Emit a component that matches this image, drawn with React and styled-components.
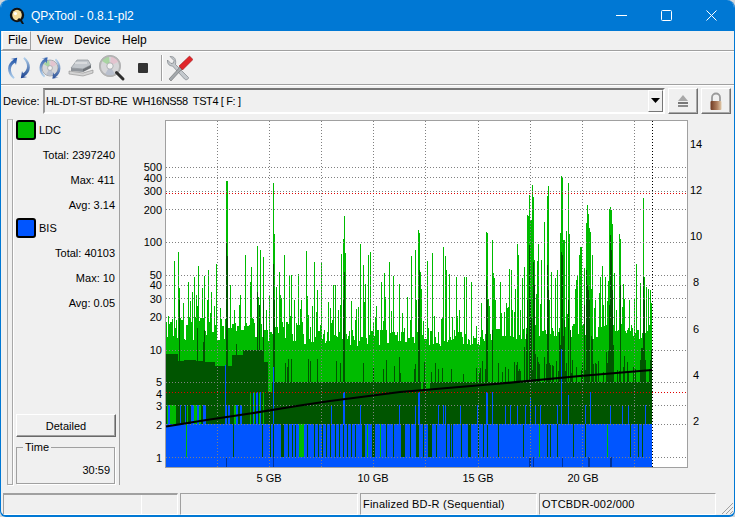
import styled, { createGlobalStyle } from "styled-components"

const GlobalStyle = createGlobalStyle`
  html, body { margin:0; padding:0; background:#cfd6dc; }
  #root { width:735px; height:517px; overflow:hidden; }
`

const uiFont = `"Liberation Sans", Arial, sans-serif`

const Window = styled.div`
  width:735px;
  height:517px;
  box-sizing:border-box;
  display:flex;
  flex-direction:column;
  background:#f0f0f0;
  border:1px solid #0078d4;
  border-top:none;
  border-bottom-width:2px;
  border-radius:8px 8px 6px 6px;
  overflow:hidden;
  font-family:${uiFont};
  font-size:11px;
  color:#000;
`
const TitleBar = styled.div`
  height:31px;
  flex:none;
  display:flex;
  align-items:center;
  background:#0078d4;
  color:#fff;
  padding-left:8px;
`
const TitleText = styled.span`
  font-size:12px;
  margin-left:6px;
  flex:1;
`
const WinButton = styled.div`
  width:45px;
  height:31px;
  display:flex;
  align-items:center;
  justify-content:center;
`
const MenuBar = styled.div`
  height:19px;
  flex:none;
  display:flex;
  padding-left:1px;
  font-size:12px;
  border-bottom:1px solid #a0a0a0;
  box-shadow:0 1px 0 #fff;
`
const MenuItem = styled.div`
  box-sizing:border-box;
  height:19px;
  padding:2px 5px 0 6px;
  width:${p => p.$w}px;
  ${p => p.$active && `
    border:1px solid;
    border-color:#fff #a0a0a0 #a0a0a0 #fff;
    padding:1px 0 0 5px;
  `}
`
const ToolBar = styled.div`
  height:32px;
  margin-top:1px;
  flex:none;
  display:flex;
  align-items:center;
  padding-left:2px;
  border-bottom:1px solid #a0a0a0;
  box-shadow:0 1px 0 #fff;
`
const ToolButton = styled.div`
  width:31px;
  height:30px;
  display:flex;
  align-items:center;
  justify-content:center;
`
const ToolSep = styled.div`
  width:1px;
  height:26px;
  margin:0 2px 0 3px;
  background:#a0a0a0;
  box-shadow:1px 0 0 #fff;
`
const DeviceRow = styled.div`
  height:26px;
  flex:none;
  margin-top:3px;
  display:flex;
  align-items:stretch;
  padding-left:2px;
`
const DeviceLabel = styled.div`
  width:40px;
  line-height:26px;
`
const Combo = styled.div`
  width:622px;
  box-sizing:border-box;
  display:flex;
  align-items:center;
  justify-content:space-between;
  background:#f0f0f0;
  border:2px solid;
  border-color:#777 #fff #fff #999;
  padding:0 0 0 1px;
  font-size:11px;
  letter-spacing:-.38px;
  white-space:pre;
`
const ComboArrow = styled.div`
  width:15px;
  height:22px;
  box-sizing:border-box;
  display:flex;
  align-items:center;
  justify-content:center;
  border:1px solid;
  border-color:#fff #777 #777 #fff;
`
const SquareButton = styled.div`
  width:30px;
  margin-left:${p => p.$gap}px;
  box-sizing:border-box;
  display:flex;
  align-items:center;
  justify-content:center;
  border:1px solid;
  border-color:#fff #707070 #707070 #fff;
  box-shadow:inset -1px -1px 0 #a8a8a8;
`
const Main = styled.div`
  flex:1;
  display:flex;
  margin-top:5px;
  min-height:0;
`
const Rail = styled.div`
  width:4px;
  height:364px;
  margin-left:6px;
  border:1px solid #a8a8a8;
  border-top-color:#c0c0c0;
  box-shadow:1px 1px 0 #fff;
`
const SidePanel = styled.div`
  width:107px;
  height:366px;
  box-sizing:border-box;
  padding-left:3px;
  display:flex;
  flex-direction:column;
  border-right:1px solid #a0a0a0;
`
const Legend = styled.div`
  height:20px;
  margin-top:${p => p.$top}px;
  margin-bottom:3px;
  display:flex;
  align-items:center;
  gap:3px;
  font-size:11px;
`
const Swatch = styled.div`
  width:20px;
  height:20px;
  box-sizing:border-box;
  border:2px solid #000;
  border-radius:3px;
  background:${p => p.$color};
`
const StatRow = styled.div`
  height:25px;
  line-height:25px;
  text-align:right;
  padding-right:4px;
`
const DetailButton = styled.div`
  height:23px;
  width:100px;
  margin-top:auto;
  box-sizing:border-box;
  text-align:center;
  line-height:22px;
  border:1px solid;
  border-color:#fff #696969 #696969 #fff;
  box-shadow:inset -1px -1px 0 #a0a0a0;
`
const TimeBox = styled.fieldset`
  margin:4px 0 1px 0;
  padding:0 4px 0 0;
  width:99px;
  height:43px;
  box-sizing:border-box;
  border:1px solid #a0a0a0;
  box-shadow:1px 1px 0 #fff;
  text-align:right;
`
const TimeTitle = styled.legend`
  text-align:left;
  margin-left:6px;
  padding:0 2px;
  line-height:12px;
`
const TimeValue = styled.div`
  margin-top:11px;
`
const ChartSvg = styled.svg`
  display:block;
  flex:none;
  margin-left:2px;
  font-family:${uiFont};
  font-size:11px;
`
const StatusBar = styled.div`
  flex:none;
  height:22px;
  margin-top:6px;
  display:flex;
  padding-left:2px;
  gap:2px;
`
const StatusCell = styled.div`
  position:relative;
  box-sizing:border-box;
  width:${p => p.$w}px;
  padding:2px 0 0 2px;
  font-size:11px;
  line-height:17px;
  letter-spacing:.2px;
  border:1px solid;
  border-color:#a0a0a0 #fff #fff #a0a0a0;
  border-top-width:${p => p.$thick ? "2px" : "1px"};
`
const CellMark = styled.div`
  position:absolute;
  left:137px;
  top:0;
  bottom:0;
  width:1px;
  background:#fff;
`
const SizeGrip = styled.svg`
  margin-left:auto;
  align-self:flex-end;
`

function rng(seed) {
  let a = seed
  return () => {
    a = (a + 0x6d2b79f5) | 0
    let t = Math.imul(a ^ (a >>> 15), 1 | a)
    t = (t + Math.imul(t ^ (t >>> 7), 61 | t)) ^ t
    return ((t ^ (t >>> 14)) >>> 0) / 4294967296
  }
}

const X0 = 166
const X1 = 652

const lightSpikes = [[174,261],[178,252],[179,288],[192,292],[198,266],[204,276],[208,270],[216,264],[226,181],[227,181],[245,255],[251,267],[257,246],[260,250],[263,257],[273,183],[274,234],[279,272],[284,255],[289,276],[291,275],[298,274],[306,251],[314,262],[321,262],
  [333,285],[335,285],[341,254],[343,239],[344,216],[345,253],[360,244],[363,265],[365,284],[368,255],[370,252],[384,273],[389,262],[381,282],[393,276],[399,284],[411,256],[415,250],[418,230],[419,233],[420,272],[427,261],[432,253],[443,247],[445,256],[446,270],[449,274],[456,277],[464,277],[466,277],[471,282],[486,232],[487,233],[492,240],[493,273],[494,278],
  [500,282],[511,270],[517,244],[518,255],[522,278],[524,267],[527,215],[528,216],[529,195],[530,220],[531,220],[532,185],[533,197],[534,260],[538,244],[541,260],[544,222],[547,196],[548,186],[551,272],[555,278],[557,270],[560,233],[561,176],[562,177],[563,240],[564,240],[566,231],[568,183],[569,234],[577,276],[579,255],[580,247],[581,247],[584,268],[586,223],[587,205],[588,214],[589,228],[590,232],[592,255],[600,277],[602,266],[605,277],[609,209],[610,207],[611,210],[612,224],[614,273],[619,234],[620,239],[623,284],[636,264],[640,283],[643,198],[644,277],[646,287],[651,303]]

const darkSpikes = [[226,243],[227,256],[273,264],[274,300],[343,300],[344,272],[418,298],[419,270],[486,280],[487,300],[492,330],[527,300],[529,245],[530,300],[531,318],[533,262],[534,285],[547,265],[548,290],[561,252],[562,255],[564,320],[568,300],[570,330],[584,305],[586,270],[587,285],[588,290],[589,300],[609,305],[610,235],[611,250],[612,290],[620,285],[643,277],[644,300],[651,350],[179,300],[197,328],[204,330],[257,292],[259,305],[263,300]]

const band = [[166,178,354],[178,184,361],[184,196,360],[196,205,361],[205,215,362],[215,232,366],[232,243,355],[243,263,350],[263,268,362]]
const clusters = [[524,536],[558,570],[584,593],[606,614],[638,646]]

const slots = [233,262,270,273,[281,283],288,292,295,307,314,318,322,326,330,335,339,343,347,351,355,[362,364],372,[373,374],386,393,[401,404],410,[416,418],423,[428,431],436,446,452,461,[468,470],478,483,487,498,523,547,550,557,573,585,630,638,642,450]
const brightSlots = [186,[299,303],367,380,539,607]
const navy = [226,273,[529,530],533,562,[588,589],[610,611]]
const stripes = [[167,168,"l"],[168,170,"b"],[170,176,"l"],[176,177,"d"],[176,177,"b"],[180,181,"b"],[185,186,"b"],[187,188,"l"],[191,194,"b"],[194,197,"l"],[197,199,"b"],[199,201,"l"],[203,206,"b"],[225,227,"b"],[228,230,"b"],[234,236,"l"],[236,238,"b"],[240,242,"b"]]
const tallBlue = [[225,226,365],[273,274,367],[343,345,392],[418,420,392],[486,488,392],[492,493,392],[561,562,349],[568,569,395],[530,531,398],[590,591,392],[253,255,392],[256,258,392],[260,261,392]]
const thinBlue = [331,360,399,415,438,443,445,460,477,505,510,517,525,535,540,557,585,590,610,622,628,645]
const thinLight = [[250,251],[254,255],[259,260],[263,264]]

const hGrid = [457.5,424.5,405.5,392.5,382.5,350.5,317.5,298.5,285.5,275.5,242.5,209.5,191.5,177.5,167.5]
const vGrid = [217.5,269.5,321.5,373.5,425.5,478.5,530.5,582.5,634.5]
const leftTicks = [[500,167],[400,178],[300,191],[200,210],[100,242],[50,275],[40,285],[30,299],[20,317],[10,350],[5,382],[4,394],[3,406],[2,425],[1,458]]
const rightTicks = [[14,144],[12,190],[10,236],[8,282],[6,329],[4,375],[2,421]]
const xTicks = [["5 GB",269],["10 GB",373],["15 GB",478],["20 GB",583]]

function buildChart() {
  const rand = rng(41)
  const paths = { light: "", dark: "", blue: "", slot: "", mid: "", navy: "" }
  const add = (key, x0, x1, y0, y1) => {
    paths[key] += `M${x0} ${y0}H${x1}V${y1}H${x0}Z`
  }
  const lightMap = new Map(lightSpikes)
  const darkMap = new Map(darkSpikes)
  let base = 322
  for (let x = X0; x < X1; x++) {
    if (rand() < 0.6) {
      const target = x < 300 ? 328 : x < 495 ? 338 : 332
      base = target + Math.round((rand() - 0.5) * (x < 300 ? 26 : 16))
    }
    let top = base
    const cluster = x > 505 && x < 620 && Math.sin(x / 9) > 0
    if (rand() < (cluster ? 0.5 : 0.34)) top = base - Math.round(rand() * (cluster ? 70 : 46))
    if (lightMap.has(x)) top = lightMap.get(x)
    add("light", x, x + 1, top, 405)

    let dtop = 382
    for (const [a, b, y] of band) if (x >= a && x < b) dtop = y
    if (dtop === 382 && rand() < 0.16) dtop = 382 - Math.round(8 + rand() * 18)
    if (dtop !== 382 && x < 263 && rand() < 0.05) dtop -= Math.round(10 + rand() * 20)
    const inCluster = clusters.some(([a, b]) => x >= a && x < b)
    if (inCluster && rand() < 0.6) dtop = 360 - Math.round(rand() * 30)
    else if (x > 495 && rand() < 0.25) dtop = 372 - Math.round(rand() * 12)
    if (darkMap.has(x)) dtop = darkMap.get(x)
    const notch = (x >= 268 && x < 272) || (x >= 421 && x < 423) || (x >= 426 && x < 430)
    add("dark", x, x + 1, notch ? (x < 300 ? 392 : 390) : dtop, 424)
  }
  add("blue", X0, X1, 424, 467)
  const range = v => Array.isArray(v) ? v : [v, v]
  for (const s of slots) {
    const [a, b] = range(s)
    add("slot", a, b + 1, 424, 457)
  }
  for (const s of brightSlots) {
    const [a, b] = range(s)
    add("mid", a, b + 1, 424, 457)
  }
  for (const s of navy) {
    const [a, b] = range(s)
    add("navy", a, b + 1, 457, 467)
  }
  for (const [a, b, c] of stripes) {
    add(c === "l" ? "mid" : c === "b" ? "blue" : "slot", a, b, 405, 424)
  }
  for (const [a, b] of thinLight) add("mid", a, b, 392, 424)
  for (const [a, b, y] of tallBlue) add("blue", a, b, y, 424)
  for (const x of thinBlue) add("blue", x, x + 1, 405, 424)
  return paths
}

const chart = buildChart()
const curve = "166,426.5 200,421 250,413.5 300,405.5 330,401 400,392 495,384 580,376 652,370"

const Chart = () => (
  <ChartSvg width="612" height="368" viewBox="122 119 612 368">
    <rect x="165.5" y="120.5" width="522" height="347" fill="#fff" stroke="#a0a0a0" />
    <g shapeRendering="crispEdges">
      <path d={chart.light} fill="#00bb00" />
      <path d={chart.dark} fill="#005500" />
      <path d={chart.blue} fill="#0055ff" />
      <path d={chart.slot} fill="#005500" />
      <path d={chart.mid} fill="#00bb00" />
      <path d={chart.navy} fill="#003399" />
    </g>
    <g stroke="#808080" strokeDasharray="1 2" shapeRendering="crispEdges" fill="none">
      {hGrid.map(y => <line key={y} x1="166" x2="687" y1={y} y2={y} />)}
      {vGrid.map(x => <line key={x} x1={x} x2={x} y1="121" y2="467" />)}
    </g>
    <g stroke="#e00000" strokeDasharray="1 2" shapeRendering="crispEdges">
      <line x1="166" x2="687" y1="193.5" y2="193.5" />
      <line x1="166" x2="687" y1="392.5" y2="392.5" />
    </g>
    <line x1="652.5" x2="652.5" y1="121" y2="467" stroke="#000" strokeDasharray="1 2" shapeRendering="crispEdges" />
    <polyline points={curve} fill="none" stroke="#000" strokeWidth="2.2" />
    <g fill="#000" textAnchor="end">
      {leftTicks.map(([v, y]) => <text key={v} x="162" y={y + 4}>{v}</text>)}
    </g>
    <g fill="#000">
      {rightTicks.map(([v, y]) => <text key={v} x={v > 9 ? 690 : 693} y={y + 4}>{v}</text>)}
    </g>
    <g fill="#000" textAnchor="middle">
      {xTicks.map(([v, x]) => <text key={v} x={x} y="482">{v}</text>)}
    </g>
  </ChartSvg>
)

const AppLogo = () => (
  <svg width="16" height="18" viewBox="0 0 16 18">
    <circle cx="8" cy="8" r="7.2" fill="#111" />
    <ellipse cx="8" cy="8" rx="4.8" ry="5.2" fill="#f4dc9c" />
    <circle cx="6.4" cy="6.6" r="1.6" fill="#fff" />
    <path d="M8 13l3 1 2 3h2l-2-4-3-2z" fill="#111" />
  </svg>
)

const ReloadIcon = () => (
  <svg width="26" height="26" viewBox="0 0 26 26">
    <defs>
      <linearGradient id="arcA" x1="0" y1="0" x2="0" y2="1">
        <stop offset="0" stopColor="#1b4fa5" /><stop offset="1" stopColor="#b5d4ee" />
      </linearGradient>
      <linearGradient id="arcB" x1="0" y1="0" x2="0" y2="1">
        <stop offset="0" stopColor="#b5d4ee" /><stop offset="1" stopColor="#173f8e" />
      </linearGradient>
    </defs>
    <path d="M8 4.500C.5 8.500 0 18 7.500 24l1.200-1.600C3.500 17.500 3.800 10.500 9 7.800l1 2.200 1.200-7.200-6.400 1.200z" fill="url(#arcA)" />
    <path d="M18 21.500c7.500-4 8-13.500.5-19.500l-1.200 1.600c5.200 4.900 4.900 11.900-.3 14.600l-1-2.200-1.200 7.200 6.400-1.200z" fill="url(#arcB)" />
  </svg>
)

const Disc = ({ cx, cy, r }) => (
  <g>
    <circle cx={cx} cy={cy} r={r} fill="#d6d6d8" stroke="#8f9296" strokeWidth=".7" />
    <path d={`M${cx} ${cy}L${cx - r * 0.8} ${cy - r * 0.5}A${r} ${r} 0 0 1 ${cx - r * 0.1} ${cy - r * 0.95}Z`} fill="#a9d4a2" />
    <path d={`M${cx} ${cy}L${cx + r * 0.1} ${cy - r * 0.95}A${r} ${r} 0 0 1 ${cx + r * 0.8} ${cy - r * 0.4}Z`} fill="#e3c4cf" />
    <path d={`M${cx} ${cy}L${cx - r * 0.5} ${cy + r * 0.8}A${r} ${r} 0 0 0 ${cx + r * 0.5} ${cy + r * 0.8}Z`} fill="#b9c0ce" />
    <circle cx={cx} cy={cy} r={r * 0.3} fill="#f2f2f2" stroke="#8f9296" strokeWidth=".6" />
  </g>
)

const DiscIcon = () => (
  <svg width="26" height="26" viewBox="0 0 26 26">
    <Disc cx={13} cy={13} r={8} />
    <path d="M8 3.500C1 7.500.8 17 7 22.500l1.200-1.600C3.500 16.500 3.700 9.500 8.800 6.500l1 2.200.8-6.400-6.200 1.200z" fill="url(#arcA)" opacity=".9" />
    <path d="M18 22.500c7-4 7.200-13.500 1-19l-1.200 1.600c4.700 4.400 4.500 11.400-.6 14.400l-1-2.200-.8 6.400 6.200-1.200z" fill="url(#arcB)" opacity=".9" />
  </svg>
)

const DriveIcon = () => (
  <svg width="26" height="24" viewBox="0 0 26 24">
    <path d="M3 12L9 4h11l3 5-8 4z" fill="#c2c7cc" stroke="#80868c" strokeWidth=".6" />
    <path d="M3 12l12 1v3L3 15z" fill="#8e9399" />
    <path d="M15 13l8-4v3l-8 4z" fill="#6e7378" />
    <path d="M1 15l14 2 10-3v3l-10 3-14-2z" fill="#d4d4d4" stroke="#7a7a7a" strokeWidth=".5" />
    <path d="M7 7h12" stroke="#eeeeee" />
  </svg>
)

const ScanIcon = () => (
  <svg width="28" height="28" viewBox="0 0 28 28">
    <Disc cx={12} cy={12} r={10.500} />
    <circle cx="12" cy="12" r="10" fill="none" stroke="#b4b4b4" strokeWidth="1.600" />
    <path d="M18.500 18.500l6.500 6.500" stroke="#2e2e2e" strokeWidth="3" strokeLinecap="round" />
  </svg>
)

const ToolsIcon = () => (
  <svg width="26" height="27" viewBox="0 0 26 27">
    <path d="M3 1.500l4 4-.5 2.500-2.500.5-3.500-3.500C.2 8 1.500 11 5.500 11l12 13c1.500 1.500 4 .5 4-1.500l-13-13C9.500 4 7 1 3 1.500z" fill="#c4c9cd" stroke="#6e7478" strokeWidth=".6" />
    <path d="M2 24l11-12 2 2L4 26z" fill="#a4a9ad" stroke="#5c5c5c" strokeWidth=".5" />
    <path d="M12 11L22.500 1 26 4.500 15.500 15z" fill="#e0262a" stroke="#8e1114" strokeWidth=".5" />
  </svg>
)

const EjectIcon = () => (
  <svg width="12" height="14" viewBox="0 0 12 14">
    <path d="M6 1l5 6H1z" fill="#a8a8a8" />
    <rect x="1" y="8" width="10" height="2" fill="#777" />
    <rect x="1" y="11" width="10" height="2" fill="#8a8a8a" />
  </svg>
)

const LockIcon = () => (
  <svg width="14" height="19" viewBox="0 0 14 19">
    <defs>
      <linearGradient id="lockFill" x1="0" y1="0" x2="1" y2="0">
        <stop offset="0" stopColor="#6f3a22" /><stop offset=".6" stopColor="#b08060" /><stop offset="1" stopColor="#e0c8a8" />
      </linearGradient>
    </defs>
    <path d="M3 9V5.500a4 4 0 0 1 8 0V9" fill="none" stroke="#9a9a9a" strokeWidth="1.800" />
    <rect x="1.500" y="9" width="11" height="9" rx="1" fill="url(#lockFill)" />
  </svg>
)

export default function App() {
  return (
    <>
      <GlobalStyle />
      <Window>
        <TitleBar>
          <AppLogo />
          <TitleText>QPxTool - 0.8.1-pl2</TitleText>
          <WinButton>
            <svg width="11" height="11"><path d="M0 5.500H11" stroke="#fff" /></svg>
          </WinButton>
          <WinButton>
            <svg width="11" height="11"><rect x=".5" y=".5" width="10" height="10" rx="1" fill="none" stroke="#fff" /></svg>
          </WinButton>
          <WinButton>
            <svg width="11" height="11"><path d="M.5.500l10 10M10.500.500l-10 10" stroke="#fff" /></svg>
          </WinButton>
        </TitleBar>
        <MenuBar>
          <MenuItem $active $w={29}>File</MenuItem>
          <MenuItem $w={37}>View</MenuItem>
          <MenuItem $w={48}>Device</MenuItem>
          <MenuItem $w={40}>Help</MenuItem>
        </MenuBar>
        <ToolBar>
          <ToolButton><ReloadIcon /></ToolButton>
          <ToolButton><DiscIcon /></ToolButton>
          <ToolButton><DriveIcon /></ToolButton>
          <ToolButton><ScanIcon /></ToolButton>
          <ToolButton>
            <svg width="10" height="10"><rect width="10" height="10" rx="1" fill="#333" /></svg>
          </ToolButton>
          <ToolSep />
          <ToolButton><ToolsIcon /></ToolButton>
        </ToolBar>
        <DeviceRow>
          <DeviceLabel>Device:</DeviceLabel>
          <Combo>
            <span>{"HL-DT-ST BD-RE  WH16NS58  TST4 [ F: ]"}</span>
            <ComboArrow>
              <svg width="9" height="6"><path d="M0 0h9L4.500 5z" fill="#000" /></svg>
            </ComboArrow>
          </Combo>
          <SquareButton $gap={3}><EjectIcon /></SquareButton>
          <SquareButton $gap={3}><LockIcon /></SquareButton>
        </DeviceRow>
        <Main>
          <Rail />
          <SidePanel>
            <Legend $top={1}><Swatch $color="#00bb00" />LDC</Legend>
            <StatRow>Total: 2397240</StatRow>
            <StatRow>Max: 411</StatRow>
            <StatRow>Avg: 3.14</StatRow>
            <Legend $top={0}><Swatch $color="#0055ff" />BIS</Legend>
            <StatRow>Total: 40103</StatRow>
            <StatRow>Max: 10</StatRow>
            <StatRow>Avg: 0.05</StatRow>
            <DetailButton>Detailed</DetailButton>
            <TimeBox>
              <TimeTitle>Time</TimeTitle>
              <TimeValue>30:59</TimeValue>
            </TimeBox>
          </SidePanel>
          <Chart />
        </Main>
        <StatusBar>
          <StatusCell $w={175} $thick><CellMark /></StatusCell>
          <StatusCell $w={178} />
          <StatusCell $w={177}>Finalized BD-R (Sequential)</StatusCell>
          <StatusCell $w={177}>OTCBDR-002/000</StatusCell>
          <SizeGrip width="16" height="16" viewBox="0 0 16 16">
            <path d="M15 4L4 15M15 8l-7 7M15 12l-3 3" stroke="#a0a0a0" fill="none" />
          </SizeGrip>
        </StatusBar>
      </Window>
    </>
  )
}
